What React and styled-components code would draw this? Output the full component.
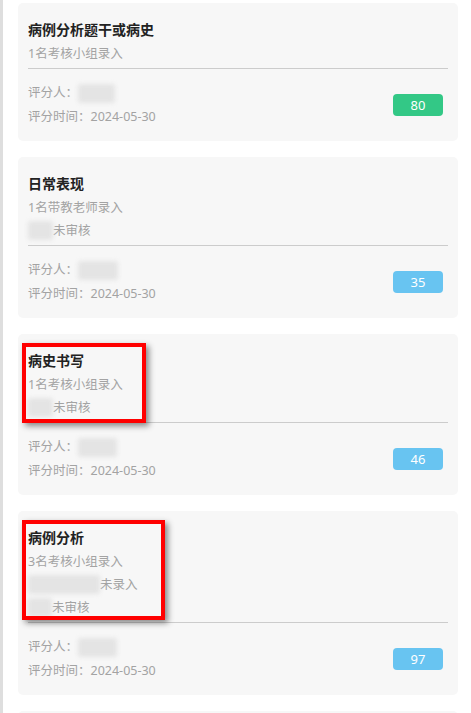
import React from "react";
import styled, { createGlobalStyle } from "styled-components";

const GlobalStyle = createGlobalStyle`
  html, body {
    margin: 0;
    padding: 0;
    background: #ffffff;
  }
  body {
    font-family: "Noto Sans", "Noto Sans CJK SC", sans-serif;
  }
`;

const Page = styled.div`
  border-left: 3px solid #dedede;
  padding: 3px 13px 0 15px;
  min-height: 713px;
  box-sizing: border-box;
`;

const Card = styled.div`
  position: relative;
  background: #f7f7f7;
  border-radius: 5px;
  padding: 15px 10px 0 10px;
  margin-bottom: 16px;
  min-height: ${({ $empty }) => ($empty ? "150px" : "0")};
`;

const Head = styled.div`
  display: flex;
  flex-direction: column;
  padding-bottom: 3px;
  border-bottom: 1px solid #cccccc;
`;

const Title = styled.div`
  font-size: 14px;
  font-weight: 700;
  color: #222222;
  line-height: 24px;
`;

const Line = styled.div`
  display: flex;
  align-items: center;
  font-size: 12.5px;
  color: #a3a3a3;
  line-height: ${({ $tight }) => ($tight ? "23px" : "24px")};
`;

const Blur = styled.span`
  display: inline-block;
  width: ${({ $w }) => $w}px;
  height: 19px;
  background: #e4e4e4;
  filter: blur(2px);
  border-radius: 3px;
`;

const Foot = styled.div`
  display: flex;
  align-items: center;
  justify-content: space-between;
  padding: 12px 5px 12px 0;
`;

const Meta = styled.div`
  display: flex;
  flex-direction: column;
`;

const Score = styled.div`
  width: 50px;
  height: 22px;
  border-radius: 4px;
  background: ${({ $tone }) => ($tone === "green" ? "#33c886" : "#68c4f1")};
  color: #ffffff;
  font-size: 13px;
  line-height: 22px;
  text-align: center;
`;

const Mark = styled.div`
  position: absolute;
  left: 4px;
  top: 9px;
  width: ${({ $w }) => $w}px;
  height: ${({ $h }) => $h}px;
  box-sizing: border-box;
  border: 4px solid #ff0000;
  box-shadow: 3px 3px 6px rgba(0, 0, 0, 0.45);
  pointer-events: none;
`;

const items = [
  {
    title: "病例分析题干或病史",
    sub: "1名考核小组录入",
    lines: [],
    rater: 37,
    score: 80,
    tone: "green",
  },
  {
    title: "日常表现",
    sub: "1名带教老师录入",
    lines: [{ w: 25, text: "未审核" }],
    rater: 40,
    score: 35,
  },
  {
    title: "病史书写",
    sub: "1名考核小组录入",
    lines: [{ w: 25, text: "未审核" }],
    rater: 39,
    score: 46,
    mark: { w: 124, h: 80 },
  },
  {
    title: "病例分析",
    sub: "3名考核小组录入",
    lines: [
      { w: 72, text: "未录入" },
      { w: 24, text: "未审核" },
    ],
    rater: 39,
    score: 97,
    mark: { w: 143, h: 100 },
  },
];

const ScoreCard = ({ item }) => (
  <Card>
    <Head>
      <Title>{item.title}</Title>
      <Line $tight>{item.sub}</Line>
      {item.lines.map((l, i) => (
        <Line $tight key={i}>
          <Blur $w={l.w} />
          {l.text}
        </Line>
      ))}
    </Head>
    <Foot>
      <Meta>
        <Line>
          评分人：
          <Blur $w={item.rater} />
        </Line>
        <Line>评分时间：2024-05-30</Line>
      </Meta>
      <Score $tone={item.tone}>{item.score}</Score>
    </Foot>
    {item.mark && <Mark $w={item.mark.w} $h={item.mark.h} />}
  </Card>
);

export default function App() {
  return (
    <>
      <GlobalStyle />
      <Page>
        {items.map((item, i) => (
          <ScoreCard key={i} item={item} />
        ))}
        {/* next card, only its top edge is in view */}
        <Card $empty />
      </Page>
    </>
  );
}
